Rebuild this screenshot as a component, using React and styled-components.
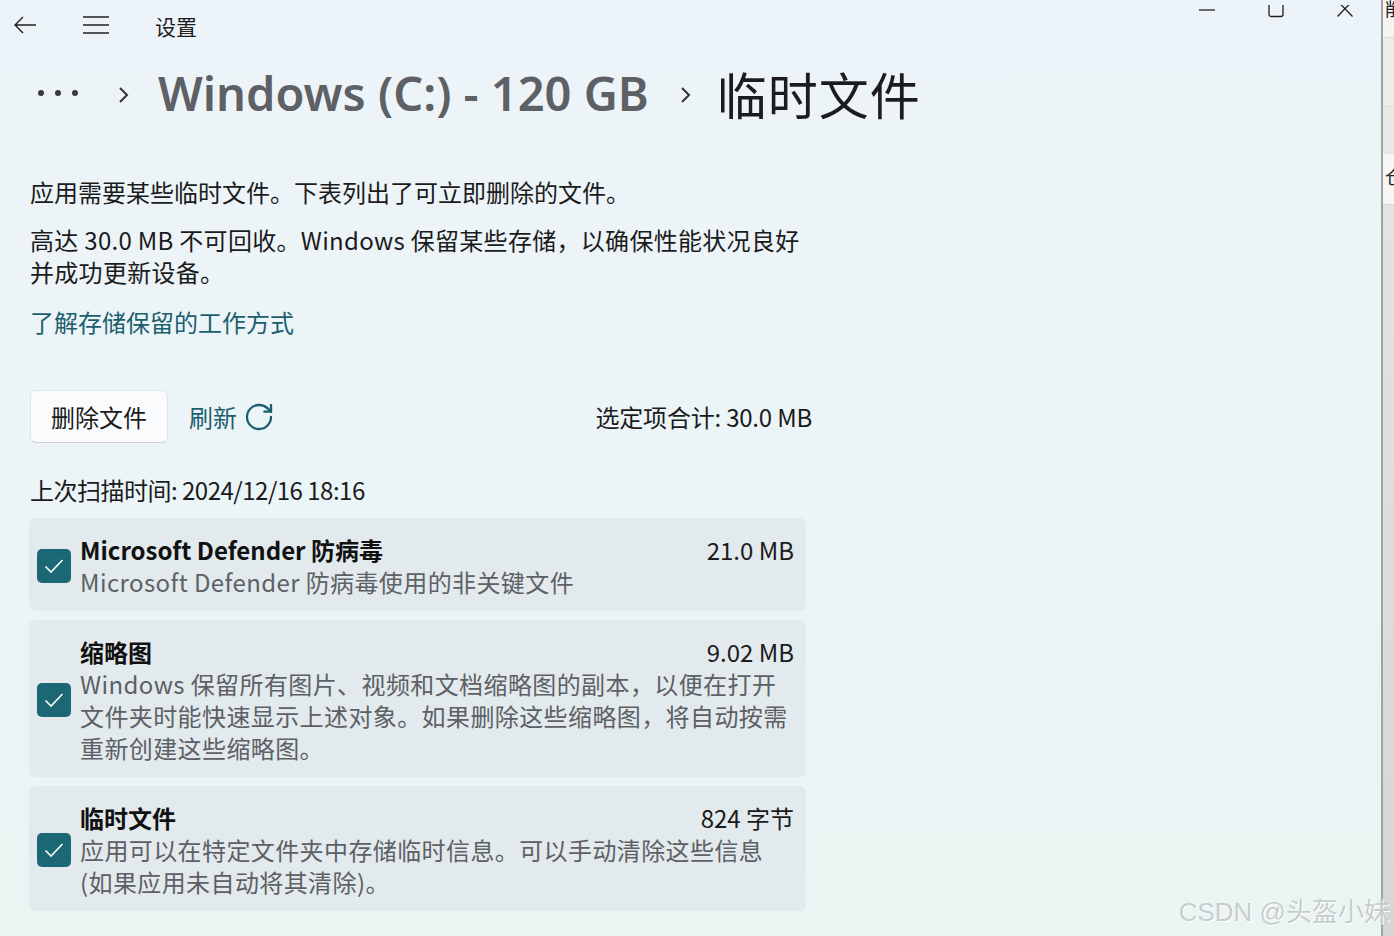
import React from "react";
import styled, { createGlobalStyle } from "styled-components";

const GlobalStyle = createGlobalStyle`
  html, body {
    margin: 0;
    padding: 0;
    overflow: hidden;
  }
  body {
    font-family: "Noto Sans CJK SC", "Noto Sans", sans-serif;
    color: #1b1b1b;
  }
`;

const items = [
  {
    title: "Microsoft Defender 防病毒",
    size: "21.0 MB",
    lines: ["Microsoft Defender 防病毒使用的非关键文件"],
  },
  {
    title: "缩略图",
    size: "9.02 MB",
    lines: [
      "Windows 保留所有图片、视频和文档缩略图的副本，以便在打开",
      "文件夹时能快速显示上述对象。如果删除这些缩略图，将自动按需",
      "重新创建这些缩略图。",
    ],
  },
  {
    title: "临时文件",
    size: "824 字节",
    lines: ["应用可以在特定文件夹中存储临时信息。可以手动清除这些信息", "(如果应用未自动将其清除)。"],
  },
];

function App() {
  return (
    <Screen>
      <GlobalStyle />
      <Window>
        <TitleBar>
          <IconButton>
            <svg width="24" height="20" viewBox="0 0 24 20" fill="none" stroke="#1f1f1f" strokeWidth="1.4">
              <path d="M23 10H2M10 2L2 10l8 8" />
            </svg>
          </IconButton>
          <IconButton>
            <svg width="26" height="20" viewBox="0 0 26 20" fill="none" stroke="#1f1f1f" strokeWidth="1.5">
              <path d="M0 2h26M0 10h26M0 18h26" />
            </svg>
          </IconButton>
          <AppName>设置</AppName>
          <Controls>
            <Control>
              <svg width="18" height="14" viewBox="0 0 18 14" fill="none" stroke="#1f1f1f" strokeWidth="1.3">
                <path d="M1 5h16" />
              </svg>
            </Control>
            <Control>
              <svg width="18" height="14" viewBox="0 0 18 14" fill="none" stroke="#1f1f1f" strokeWidth="1.3">
                <rect x="2" y="-8" width="14" height="19.5" rx="2" />
              </svg>
            </Control>
            <Control>
              <svg width="18" height="14" viewBox="0 0 18 14" fill="none" stroke="#1f1f1f" strokeWidth="1.3">
                <path d="M1.5 -4L16.5 11.5M16.5 -4L1.5 11.5" />
              </svg>
            </Control>
          </Controls>
        </TitleBar>

        <Breadcrumb>
          <Dots>
            <span />
            <span />
            <span />
          </Dots>
          <Chevron>
            <svg width="14" height="18" viewBox="0 0 14 18" fill="none" stroke="#333" strokeWidth="2">
              <path d="M3 2l7 7-7 7" />
            </svg>
          </Chevron>
          <Crumb>Windows (C:) - 120 GB</Crumb>
          <Chevron>
            <svg width="14" height="18" viewBox="0 0 14 18" fill="none" stroke="#333" strokeWidth="2">
              <path d="M3 2l7 7-7 7" />
            </svg>
          </Chevron>
          <Crumb $current>临时文件</Crumb>
        </Breadcrumb>

        <Content>
          <Para>应用需要某些临时文件。下表列出了可立即删除的文件。</Para>
          <Para $gap={16} $spacing={0.3}>
            高达 30.0 MB 不可回收。Windows 保留某些存储，以确保性能状况良好
            <br />
            并成功更新设备。
          </Para>
          <Link $gap={18}>了解存储保留的工作方式</Link>

          <Actions>
            <Button>删除文件</Button>
            <Refresh>
              刷新
              <svg width="32" height="32" viewBox="0 0 24 24" fill="none" stroke="#1b5f6e" strokeWidth="1.7" strokeLinecap="round" strokeLinejoin="round">
                <path d="M21 12a9 9 0 1 1-9-9c2.52 0 4.93 1 6.74 2.74L21 8" />
                <path d="M21 3v5h-5" />
              </svg>
            </Refresh>
            <Total>选定项合计: 30.0 MB</Total>
          </Actions>

          <Para $gap={31} $spacing={-0.5}>上次扫描时间: 2024/12/16 18:16</Para>

          <List>
            {items.map((it) => (
              <Card key={it.title}>
                <Check>
                  <svg width="20" height="16" viewBox="0 0 20 16" fill="none" stroke="#fff" strokeWidth="1.6">
                    <path d="M1.5 8.5l5.5 5.5L18.5 2" />
                  </svg>
                </Check>
                <CardBody>
                  <CardHead>
                    <CardTitle>{it.title}</CardTitle>
                    <CardSize>{it.size}</CardSize>
                  </CardHead>
                  <CardDesc>
                    {it.lines.map((l, i) => (
                      <div key={i}>{l}</div>
                    ))}
                  </CardDesc>
                </CardBody>
              </Card>
            ))}
          </List>
        </Content>
      </Window>

      <Behind>
        <BehindRow $h={37} $bg="#f5f5f5" $border="#dcdcdc">
          <Clip $top={-4}>削</Clip>
        </BehindRow>
        <BehindRow $h={68} $bg="#ececec" $border="#dddddd" />
        <BehindRow $h={47} $bg="#e8e8e8" />
        <BehindRow $h={50} $bg="#f6f6f6" $border="#d8d8d8">
          <Clip $top={10}>仓</Clip>
        </BehindRow>
        <BehindFill />
      </Behind>

      <Watermark>CSDN @头盔小妹</Watermark>
    </Screen>
  );
}

const Screen = styled.div`
  position: relative;
  display: flex;
  width: 1394px;
  height: 936px;
  overflow: hidden;
`;

const Window = styled.div`
  width: 1381px;
  flex-shrink: 0;
  background: linear-gradient(180deg, #edf4f9 0%, #ebf4f7 55%, #eaf5f3 100%);
  display: flex;
  flex-direction: column;
`;

const TitleBar = styled.div`
  height: 50px;
  display: flex;
  align-items: center;
  padding-left: 13px;
`;

const IconButton = styled.div`
  display: flex;
  align-items: center;
  margin-right: 46px;
`;

const AppName = styled.div`
  font-size: 21px;
  color: #1c1c1c;
  margin-top: 1px;
`;

const Controls = styled.div`
  margin-left: auto;
  align-self: flex-start;
  display: flex;
  gap: 51px;
  padding-right: 27px;
`;

const Control = styled.div`
  width: 18px;
  height: 14px;
`;

const Breadcrumb = styled.div`
  display: flex;
  align-items: center;
  height: 64px;
  margin-top: 11px;
  padding-left: 38px;
`;

const Dots = styled.div`
  display: flex;
  gap: 11px;
  margin-right: 39px;
  span {
    width: 6px;
    height: 6px;
    border-radius: 50%;
    background: #3a3a3a;
  }
`;

const Chevron = styled.div`
  display: flex;
  margin-right: 27px;
  margin-top: 4px;
`;

const Crumb = styled.div`
  font-family: ${(p) => (p.$current ? `"Noto Sans CJK SC", sans-serif` : `"Noto Sans", sans-serif`)};
  font-size: ${(p) => (p.$current ? "50px" : "47px")};
  font-weight: ${(p) => (p.$current ? 400 : 600)};
  color: ${(p) => (p.$current ? "#1c1c1c" : "#5d6064")};
  margin-right: 30px;
  margin-left: ${(p) => (p.$current ? "-3px" : "0")};
  letter-spacing: ${(p) => (p.$current ? "1px" : "0")};
`;

const Content = styled.div`
  width: 782px;
  padding-left: 30px;
  margin-top: 51px;
  display: flex;
  flex-direction: column;
`;

const Para = styled.div`
  font-size: 24px;
  line-height: 32px;
  color: #1b1b1b;
  margin-top: ${(p) => p.$gap || 0}px;
  letter-spacing: ${(p) => p.$spacing || 0}px;
  white-space: nowrap;
`;

const Link = styled(Para)`
  color: #1b5f6e;
`;

const Actions = styled.div`
  display: flex;
  align-items: center;
  margin-top: 52px;
  height: 53px;
`;

const Button = styled.div`
  height: 51px;
  padding: 0 20px;
  display: flex;
  align-items: center;
  font-size: 24px;
  color: #1b1b1b;
  background: #f9fbfc;
  border: 1px solid #dfe4e6;
  border-bottom-color: #cdd2d4;
  border-radius: 6px;
`;

const Refresh = styled.div`
  display: flex;
  align-items: center;
  gap: 6px;
  margin-left: 21px;
  font-size: 24px;
  color: #1b5f6e;
`;

const Total = styled.div`
  margin-left: auto;
  font-size: 24px;
  color: #1b1b1b;
  letter-spacing: -0.2px;
`;

const List = styled.div`
  display: flex;
  flex-direction: column;
  gap: 9px;
  margin-top: 12px;
  margin-left: -1px;
  width: 777px;
`;

const Card = styled.div`
  display: flex;
  align-items: center;
  background: #e2eaed;
  border-radius: 6px;
  padding: 16px 12px 13px 8px;
`;

const Check = styled.div`
  width: 34px;
  height: 34px;
  flex-shrink: 0;
  border-radius: 5px;
  background: #1c6774;
  display: flex;
  align-items: center;
  justify-content: center;
  margin-right: 9px;
`;

const CardBody = styled.div`
  flex: 1;
  display: flex;
  flex-direction: column;
`;

const CardHead = styled.div`
  display: flex;
  justify-content: space-between;
  align-items: center;
  height: 32px;
`;

const CardTitle = styled.div`
  font-size: 24px;
  line-height: 32px;
  font-weight: 700;
  color: #111;
`;

const CardSize = styled.div`
  font-size: 24px;
  line-height: 32px;
  color: #1b1b1b;
`;

const CardDesc = styled.div`
  font-size: 24px;
  line-height: 32px;
  color: #5d6064;
  letter-spacing: 0.4px;
  white-space: nowrap;
`;

const Behind = styled.div`
  flex: 1;
  border-left: 2px solid #a3a3a3;
  display: flex;
  flex-direction: column;
  overflow: hidden;
`;

const BehindRow = styled.div`
  position: relative;
  height: ${(p) => p.$h}px;
  background: ${(p) => p.$bg};
  border-bottom: ${(p) => (p.$border ? `1px solid ${p.$border}` : "none")};
  overflow: hidden;
  flex-shrink: 0;
`;

const Clip = styled.div`
  font-size: 18px;
  color: #222;
  margin-top: ${(p) => p.$top}px;
  margin-left: 2px;
  line-height: 24px;
`;

const BehindFill = styled.div`
  flex: 1;
  background: linear-gradient(180deg, #e3e3e3, #d6d6d6);
`;

const Watermark = styled.div`
  position: absolute;
  right: 4px;
  bottom: 8px;
  font-size: 26px;
  color: rgba(185, 190, 192, 0.75);
  text-shadow: 1px 1px 0 rgba(255, 255, 255, 0.9);
  font-family: "Liberation Sans", "Noto Sans CJK SC", sans-serif;
`;

export default App;
